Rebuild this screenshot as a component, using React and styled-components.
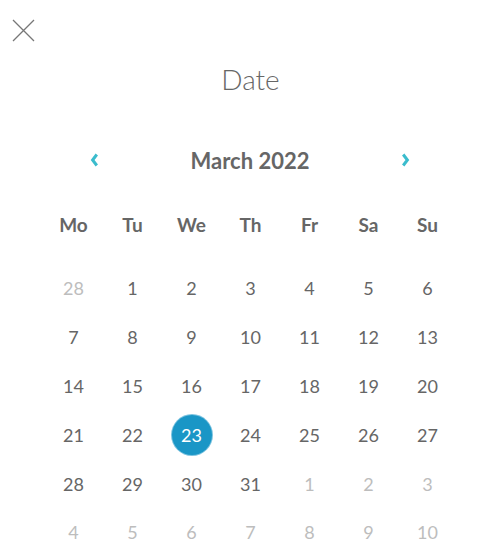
import React from "react";
import styled, { createGlobalStyle } from "styled-components";

const Global = createGlobalStyle`
  html, body {
    margin: 0;
    padding: 0;
    background: #fff;
    font-family: Lato, "Open Sans", sans-serif;
  }
`;

const Page = styled.div`
  width: 489px;
  height: 556px;
  overflow: hidden;
  position: relative;
`;

const Close = styled.button`
  position: absolute;
  top: 19px;
  left: 12px;
  width: 23px;
  height: 23px;
  padding: 0;
  border: 0;
  background: none;
  cursor: pointer;
`;

const Body = styled.div`
  width: 413px;
  margin-left: 44px;
  display: flex;
  flex-direction: column;
  align-items: center;
`;

const Title = styled.h1`
  margin: 61px 0 0;
  font-weight: 300;
  font-size: 28px;
  line-height: 36px;
  color: #666;
`;

const MonthBar = styled.div`
  width: 100%;
  margin-top: 48px;
  height: 30px;
  display: flex;
  align-items: center;
  justify-content: space-between;
  padding: 0 47px 0 46px;
  box-sizing: border-box;
`;

const Arrow = styled.button`
  border: 0;
  background: none;
  padding: 0;
  width: 9px;
  height: 14px;
  display: flex;
  cursor: pointer;
`;

const Month = styled.div`
  font-weight: 700;
  font-size: 22px;
  color: #666;
`;

const Grid = styled.div`
  width: 100%;
  display: grid;
  grid-template-columns: repeat(7, 59px);
  grid-auto-rows: 48.8px;
`;

const Head = styled(Grid)`
  margin-top: 34px;
  grid-auto-rows: 30px;
  margin-bottom: 25px;
`;

const Weekday = styled.div`
  display: flex;
  align-items: center;
  justify-content: center;
  font-weight: 700;
  font-size: 19px;
  color: #666;
`;

const Day = styled.div`
  display: flex;
  align-items: center;
  justify-content: center;
  font-size: 18px;
  color: ${(p) => (p.$muted ? "#bdbdbd" : "#666")};
`;

const Selected = styled.span`
  width: 40px;
  height: 40px;
  border-radius: 50%;
  background: #1a96c6;
  box-shadow: 0 0 0 1px #7cc3e0;
  color: #fff;
  display: flex;
  align-items: center;
  justify-content: center;
  font-size: 18px;
`;

const weekdays = ["Mo", "Tu", "We", "Th", "Fr", "Sa", "Su"];

const days = [];
days.push({ n: 28, muted: true });
for (let i = 1; i <= 31; i++) days.push({ n: i });
for (let i = 1; i <= 10; i++) days.push({ n: i, muted: true });

const Chevron = ({ dir }) => (
  <svg width="9" height="14" viewBox="0 0 9 14">
    <path
      d={dir === "left" ? "M6.8 1.5 L2.6 7 L6.8 12.5" : "M2.2 1.5 L6.4 7 L2.2 12.5"}
      fill="none"
      stroke="#3bbccd"
      strokeWidth="3"
    />
  </svg>
);

export default function App() {
  return (
    <Page>
      <Global />
      <Close aria-label="close">
        <svg width="23" height="23" viewBox="0 0 23 23">
          <path d="M1 1 L22 22 M22 1 L1 22" stroke="#777" strokeWidth="1.3" />
        </svg>
      </Close>
      <Body>
        <Title>Date</Title>
        <MonthBar>
          <Arrow aria-label="previous">
            <Chevron dir="left" />
          </Arrow>
          <Month>March 2022</Month>
          <Arrow aria-label="next">
            <Chevron dir="right" />
          </Arrow>
        </MonthBar>
        <Head>
          {weekdays.map((w) => (
            <Weekday key={w}>{w}</Weekday>
          ))}
        </Head>
        <Grid>
          {days.map((d, i) => (
            <Day key={i} $muted={d.muted}>
              {!d.muted && d.n === 23 ? <Selected>{d.n}</Selected> : d.n}
            </Day>
          ))}
        </Grid>
      </Body>
    </Page>
  );
}
